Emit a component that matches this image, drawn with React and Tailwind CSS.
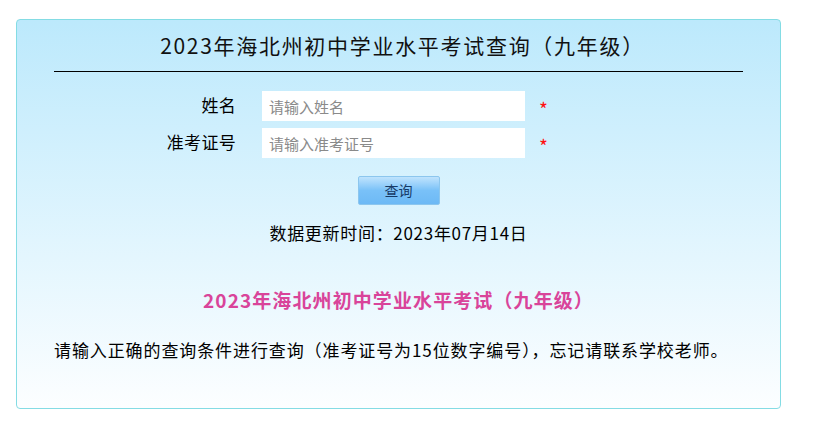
import React from 'react'

const font = { fontFamily: '"Noto Sans CJK SC", "Noto Sans", sans-serif' }

function Field({ label, placeholder }) {
  return (
    <div className="flex items-center h-[30px]">
      <label className="w-[182px] text-right text-[17px] text-black tracking-[0.3px] -mt-[3px]">{label}</label>
      <input
        type="text"
        placeholder={placeholder}
        className="ml-[26px] w-[263px] h-[30px] bg-white px-[7px] text-[15px] text-gray-700 placeholder:text-[#8a8a8a] outline-none"
      />
      <span className="ml-[14px] text-[19px] leading-none text-[#ff1010] mt-[4px]">*</span>
    </div>
  )
}

export default function App() {
  return (
    <div className="w-[816px] h-[426px] bg-white pt-[19px] pl-[16px]" style={font}>
      <div className="w-[765px] h-[390px] rounded-[4px] border border-[#84dce4] bg-gradient-to-b from-[#bce9fc] to-[#fcfeff] px-[37px]">
        {/* header */}
        <div className="h-[52px] border-b border-black flex items-center justify-center pl-[8px]">
          <h1 className="text-[21px] tracking-[1.7px] text-[#111]">2023年海北州初中学业水平考试查询（九年级）</h1>
        </div>

        {/* form */}
        <div className="mt-[19px] flex flex-col gap-[7px]">
          <Field label="姓名" placeholder="请输入姓名" />
          <Field label="准考证号" placeholder="请输入准考证号" />
        </div>

        <div className="mt-[18px] flex justify-center">
          <button className="w-[82px] h-[29px] rounded-[2px] border border-[#8cc6ee] bg-gradient-to-b from-[#bfe3fd] via-[#79c1f8] to-[#6db9f5] text-[14px] text-[#173a66]">
            查询
          </button>
        </div>

        <p className="mt-[15px] text-center text-[17px] tracking-[0.7px] text-black">数据更新时间：2023年07月14日</p>

        <h2 className="mt-[40px] text-center text-[19px] tracking-[1.1px] font-bold text-[#d9449a]">
          2023年海北州初中学业水平考试（九年级）
        </h2>

        <p className="mt-[23px] text-[17px] tracking-[0.9px] text-black">
          请输入正确的查询条件进行查询（准考证号为15位数字编号），忘记请联系学校老师。
        </p>
      </div>
    </div>
  )
}
